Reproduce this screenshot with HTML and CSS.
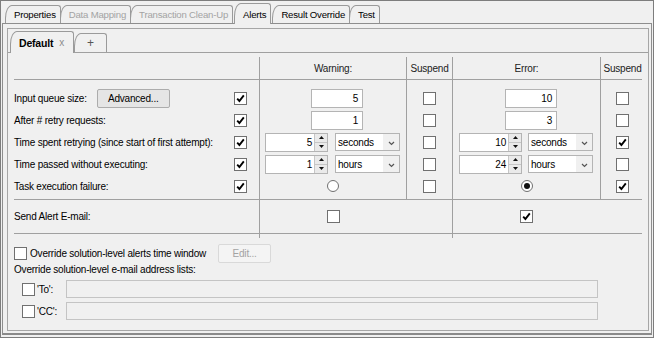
FILE: index.html
```html
<!DOCTYPE html>
<html>
<head>
    <meta charset="UTF-8">
    <title>Alerts</title>
    <link rel="stylesheet" href="styles.css">
</head>
<body>
<div class="window">
    <div class="tabs">
        <div class="tab">Properties</div>
        <div class="tab disabled">Data Mapping</div>
        <div class="tab disabled">Transaction Clean-Up</div>
        <div class="tab active">Alerts</div>
        <div class="tab">Result Override</div>
        <div class="tab">Test</div>
    </div>
    <div class="panel">
        <div class="folder">
            <div class="subtabs">
                <div class="subtab active"><b>Default</b><span class="close">x</span></div>
                <div class="subtab add">+</div>
            </div>

            <div class="matrix">
                <div class="mrow head">
                    <div class="cell"></div>
                    <div class="cell">Warning:</div>
                    <div class="cell">Suspend</div>
                    <div class="cell">Error:</div>
                    <div class="cell">Suspend</div>
                </div>

                <div class="mrow first">
                    <div class="cell label">
                        <span>Input queue size:</span>
                        <span class="btn adv">Advanced...</span>
                        <span class="cb on"><svg viewBox="0 0 9 9"><path d="M1.2 4.6l2.2 2.4 4.4-5.6"/></svg></span>
                    </div>
                    <div class="cell num warn-num"><span class="field">5</span></div>
                    <div class="cell"><span class="cb"></span></div>
                    <div class="cell num err-num"><span class="field">10</span></div>
                    <div class="cell"><span class="cb"></span></div>
                </div>

                <div class="mrow">
                    <div class="cell label">
                        <span>After # retry requests:</span>
                        <span class="cb on"><svg viewBox="0 0 9 9"><path d="M1.2 4.6l2.2 2.4 4.4-5.6"/></svg></span>
                    </div>
                    <div class="cell num warn-num"><span class="field">1</span></div>
                    <div class="cell"><span class="cb"></span></div>
                    <div class="cell num err-num"><span class="field">3</span></div>
                    <div class="cell"><span class="cb"></span></div>
                </div>

                <div class="mrow">
                    <div class="cell label">
                        <span>Time spent retrying (since start of first attempt):</span>
                        <span class="cb on"><svg viewBox="0 0 9 9"><path d="M1.2 4.6l2.2 2.4 4.4-5.6"/></svg></span>
                    </div>
                    <div class="cell num warn-spin">
                        <span class="spin">
                            <span class="spin-val">5</span>
                            <span class="spin-btns">
                                <span><svg viewBox="0 0 5 3"><path class="fill" d="M0 3h5L2.5 0z"/></svg></span>
                                <span><svg viewBox="0 0 5 3"><path class="fill" d="M0 0h5L2.5 3z"/></svg></span>
                            </span>
                        </span>
                        <span class="combo">
                            <span class="combo-val">seconds</span>
                            <span class="combo-btn"><svg viewBox="0 0 7 5"><path d="M1 1l2.5 2.5L6 1"/></svg></span>
                        </span>
                    </div>
                    <div class="cell"><span class="cb"></span></div>
                    <div class="cell num err-spin">
                        <span class="spin">
                            <span class="spin-val">10</span>
                            <span class="spin-btns">
                                <span><svg viewBox="0 0 5 3"><path class="fill" d="M0 3h5L2.5 0z"/></svg></span>
                                <span><svg viewBox="0 0 5 3"><path class="fill" d="M0 0h5L2.5 3z"/></svg></span>
                            </span>
                        </span>
                        <span class="combo">
                            <span class="combo-val">seconds</span>
                            <span class="combo-btn"><svg viewBox="0 0 7 5"><path d="M1 1l2.5 2.5L6 1"/></svg></span>
                        </span>
                    </div>
                    <div class="cell"><span class="cb on"><svg viewBox="0 0 9 9"><path d="M1.2 4.6l2.2 2.4 4.4-5.6"/></svg></span></div>
                </div>

                <div class="mrow">
                    <div class="cell label">
                        <span>Time passed without executing:</span>
                        <span class="cb on"><svg viewBox="0 0 9 9"><path d="M1.2 4.6l2.2 2.4 4.4-5.6"/></svg></span>
                    </div>
                    <div class="cell num warn-spin">
                        <span class="spin">
                            <span class="spin-val">1</span>
                            <span class="spin-btns">
                                <span><svg viewBox="0 0 5 3"><path class="fill" d="M0 3h5L2.5 0z"/></svg></span>
                                <span><svg viewBox="0 0 5 3"><path class="fill" d="M0 0h5L2.5 3z"/></svg></span>
                            </span>
                        </span>
                        <span class="combo">
                            <span class="combo-val">hours</span>
                            <span class="combo-btn"><svg viewBox="0 0 7 5"><path d="M1 1l2.5 2.5L6 1"/></svg></span>
                        </span>
                    </div>
                    <div class="cell"><span class="cb"></span></div>
                    <div class="cell num err-spin">
                        <span class="spin">
                            <span class="spin-val">24</span>
                            <span class="spin-btns">
                                <span><svg viewBox="0 0 5 3"><path class="fill" d="M0 3h5L2.5 0z"/></svg></span>
                                <span><svg viewBox="0 0 5 3"><path class="fill" d="M0 0h5L2.5 3z"/></svg></span>
                            </span>
                        </span>
                        <span class="combo">
                            <span class="combo-val">hours</span>
                            <span class="combo-btn"><svg viewBox="0 0 7 5"><path d="M1 1l2.5 2.5L6 1"/></svg></span>
                        </span>
                    </div>
                    <div class="cell"><span class="cb"></span></div>
                </div>

                <div class="mrow last">
                    <div class="cell label">
                        <span>Task execution failure:</span>
                        <span class="cb on"><svg viewBox="0 0 9 9"><path d="M1.2 4.6l2.2 2.4 4.4-5.6"/></svg></span>
                    </div>
                    <div class="cell"><span class="rb"></span></div>
                    <div class="cell"><span class="cb"></span></div>
                    <div class="cell"><span class="rb on"></span></div>
                    <div class="cell"><span class="cb on"><svg viewBox="0 0 9 9"><path d="M1.2 4.6l2.2 2.4 4.4-5.6"/></svg></span></div>
                </div>

                <div class="mrow send">
                    <div class="cell label"><span>Send Alert E-mail:</span></div>
                    <div class="cell"><span class="cb"></span></div>
                    <div class="cell plain"></div>
                    <div class="cell"><span class="cb on"><svg viewBox="0 0 9 9"><path d="M1.2 4.6l2.2 2.4 4.4-5.6"/></svg></span></div>
                    <div class="cell plain"></div>
                </div>

                <div class="mrow tail">
                    <div class="cell"></div>
                    <div class="cell"></div>
                    <div class="cell plain"></div>
                    <div class="cell"></div>
                    <div class="cell plain"></div>
                </div>
            </div>

            <div class="options">
                <div class="opt-row">
                    <span class="cb"></span>
                    <span class="opt-label">Override solution-level alerts time window</span>
                    <span class="btn edit">Edit...</span>
                </div>
                <div class="lists-label">Override solution-level e-mail address lists:</div>
                <div class="addr">
                    <span class="cb"></span>
                    <span class="addr-label">'To':</span>
                    <span class="addr-input"></span>
                </div>
                <div class="addr">
                    <span class="cb"></span>
                    <span class="addr-label">'CC':</span>
                    <span class="addr-input"></span>
                </div>
            </div>
        </div>
    </div>
</div>
</body>
</html>
```

FILE: styles.css
```css
body {
    margin: 0;
    background-color: #f0f0f0;
    font-family: "Liberation Sans", Arial, sans-serif;
    font-size: 10px;
    letter-spacing: -0.2px;
    color: #000;
}

.window {
    width: 654px;
    height: 338px;
    box-sizing: border-box;
    border: 1px solid #7d7d7d;
    padding: 0 1px 2px 1px;
    display: flex;
    flex-direction: column;
}

/* outer tab strip */
.tabs {
    display: flex;
    align-items: flex-end;
    height: 23px;
    box-sizing: border-box;
    border-bottom: 1px solid #8e8e8e;
    padding-left: 3px;
    font-size: 9.6px;
}

.tab {
    height: 18px;
    box-sizing: border-box;
    padding: 0 4px 0 8px;
    border: 1px solid #9a9a9a;
    border-bottom: none;
    border-radius: 7px 3px 0 0 / 13px 3px 0 0;
    display: flex;
    align-items: center;
    margin-right: -1px;
}

.tab.disabled {
    color: #a3a3a3;
}

.tab.active {
    height: 21px;
    margin-bottom: -1px;
    background-color: #f0f0f0;
    margin-left: 2px;
    margin-right: 1px;
}

.panel {
    flex: 1;
    display: flex;
    flex-direction: column;
    border: 1px solid #8e8e8e;
    border-top: none;
    border-bottom: 2px solid #8a8a8a;
}

.folder {
    flex: 1;
    margin: 4px 2px 2px 4px;
    border: 1px solid #a6a6a6;
    padding: 0 6px;
}

/* inner tab strip */
.subtabs {
    display: flex;
    align-items: flex-end;
    height: 24px;
    box-sizing: border-box;
    border-bottom: 1px solid #a0a0a0;
    margin: 0 -6px;
    padding-left: 2px;
}

.subtab {
    box-sizing: border-box;
    border: 1px solid #9a9a9a;
    border-bottom: none;
    border-radius: 7px 3px 0 0 / 13px 3px 0 0;
    display: flex;
    align-items: center;
}

.subtab.active {
    height: 22px;
    width: 64px;
    padding-left: 8px;
    margin-bottom: -1px;
    background-color: #f0f0f0;
    font-size: 10.5px;
}

.subtab .close {
    color: #8c8c8c;
    margin-left: 6px;
    font-size: 10px;
}

.subtab.add {
    height: 19px;
    width: 33px;
    justify-content: center;
    color: #555;
    font-size: 12px;
}

/* alert matrix */
.matrix {
    margin-top: 4px;
}

.mrow {
    display: grid;
    grid-template-columns: 245px 147px 46px 148px 41px;
    height: 22px;
}

.mrow.head {
    border-bottom: 1px solid #a0a0a0;
    color: #222;
}

.mrow.first {
    height: 29px;
}

.mrow.first > .cell {
    padding-top: 7px;
}

.mrow.last {
    height: 24px;
}

.mrow.last > .cell {
    padding-bottom: 2px;
}

.mrow.send {
    height: 33px;
    border-top: 1px solid #a0a0a0;
    border-bottom: 1px solid #a0a0a0;
}

.mrow.tail {
    height: 4px;
}

.cell {
    display: flex;
    align-items: center;
    box-sizing: border-box;
}

.mrow > .cell + .cell {
    border-left: 1px solid #a0a0a0;
    justify-content: center;
}

.mrow > .cell:nth-child(5) {
    padding-left: 3px;
}

.mrow > .cell.plain {
    border-left: none;
}

.cell.label {
    padding-right: 12px;
}

.cell.label .cb {
    margin-left: auto;
}

.mrow > .cell.num {
    justify-content: flex-start;
}

.warn-num {
    padding-left: 51px;
}

.err-num {
    padding-left: 52px;
}

.warn-spin {
    padding-left: 5px;
}

.err-spin {
    padding-left: 6px;
}

.btn {
    box-sizing: border-box;
    height: 19px;
    display: inline-flex;
    align-items: center;
    justify-content: center;
    border: 1px solid #acacac;
    border-radius: 2px;
    background-color: #e5e5e5;
}

.btn.adv {
    width: 73px;
    margin-left: 10px;
}

.btn.edit {
    width: 53px;
    margin-left: 12px;
    color: #a3a3a3;
    background-color: #f4f4f4;
    border-color: #d9d9d9;
}

.field {
    width: 52px;
    height: 19px;
    box-sizing: border-box;
    border: 1px solid #b4b4b4;
    background-color: #fff;
    display: flex;
    align-items: center;
    justify-content: flex-end;
    padding-right: 4px;
}

.spin {
    width: 63px;
    height: 19px;
    box-sizing: border-box;
    border: 1px solid #b4b4b4;
    background-color: #fff;
    display: flex;
}

.spin-val {
    flex: 1;
    display: flex;
    align-items: center;
    justify-content: flex-end;
    padding-right: 2px;
}

.spin-btns {
    width: 12px;
    display: flex;
    flex-direction: column;
    border-left: 1px solid #c6c6c6;
}

.spin-btns span {
    flex: 1;
    display: flex;
    align-items: center;
    justify-content: center;
    background-color: #eaeaea;
}

.spin-btns span + span {
    border-top: 1px solid #c6c6c6;
}

.spin-btns svg {
    width: 5px;
    height: 3px;
}

.fill {
    fill: #111;
}

.combo {
    width: 65px;
    height: 18px;
    box-sizing: border-box;
    border: 1px solid #b4b4b4;
    display: flex;
    margin-left: 7px;
}

.err-spin .combo {
    margin-left: 6px;
}

.combo-val {
    flex: 1;
    background-color: #fff;
    display: flex;
    align-items: center;
    padding-left: 2px;
}

.combo-btn {
    width: 16px;
    display: flex;
    justify-content: center;
    align-items: flex-end;
    padding-bottom: 4px;
    box-sizing: border-box;
    background-color: #f0f0f0;
}

.combo-btn svg {
    width: 7px;
    height: 5px;
    fill: none;
    stroke: #555;
    stroke-width: 1.2;
}

.cb {
    width: 13px;
    height: 13px;
    box-sizing: border-box;
    border: 1px solid #707070;
    background-color: #fff;
    display: inline-flex;
    align-items: center;
    justify-content: center;
    flex: none;
}

.cb svg {
    width: 9px;
    height: 9px;
    fill: none;
    stroke: #000;
    stroke-width: 1.9;
}

.rb {
    width: 12px;
    height: 12px;
    box-sizing: border-box;
    border: 1px solid #707070;
    border-radius: 50%;
    background-color: #fff;
    display: flex;
    align-items: center;
    justify-content: center;
}

.rb.on::after {
    content: "";
    width: 6px;
    height: 6px;
    border-radius: 50%;
    background-color: #111;
}

/* lower options */
.opt-row {
    display: flex;
    align-items: center;
    height: 20px;
    margin-top: 5px;
}

.opt-label {
    margin-left: 3px;
}

.lists-label {
    line-height: 14px;
}

.addr {
    display: flex;
    align-items: center;
    height: 18px;
    margin-top: 3px;
    padding-left: 8px;
    margin-right: 44px;
}

.addr + .addr {
    margin-top: 4px;
}

.addr-label {
    width: 29px;
    margin-left: 2px;
}

.addr-input {
    flex: 1;
    height: 18px;
    box-sizing: border-box;
    border: 1px solid #c4c4c4;
    background-color: #f0f0f0;
}
```
